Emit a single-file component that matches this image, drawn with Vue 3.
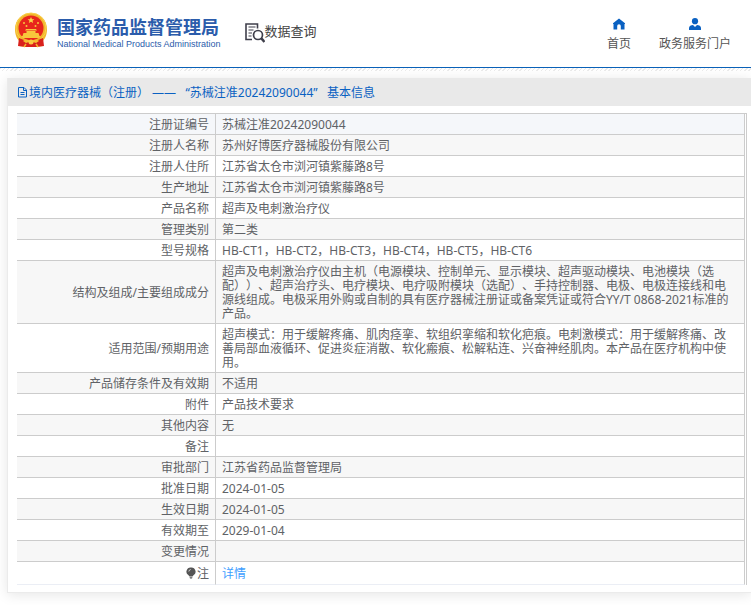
<script setup>
const rows = [
  { label: '注册证编号', value: '苏械注准20242090044' },
  { label: '注册人名称', value: '苏州好博医疗器械股份有限公司' },
  { label: '注册人住所', value: '江苏省太仓市浏河镇紫藤路8号' },
  { label: '生产地址', value: '江苏省太仓市浏河镇紫藤路8号' },
  { label: '产品名称', value: '超声及电刺激治疗仪' },
  { label: '管理类别', value: '第二类' },
  { label: '型号规格', value: 'HB-CT1，HB-CT2，HB-CT3，HB-CT4，HB-CT5，HB-CT6' },
  {
    label: '结构及组成/主要组成成分',
    value:
      '超声及电刺激治疗仪由主机（电源模块、控制单元、显示模块、超声驱动模块、电池模块（选配））、超声治疗头、电疗模块、电疗吸附模块（选配）、手持控制器、电极、电极连接线和电源线组成。电极采用外购或自制的具有医疗器械注册证或备案凭证或符合YY/T 0868-2021标准的产品。',
  },
  {
    label: '适用范围/预期用途',
    value:
      '超声模式：用于缓解疼痛、肌肉痉挛、软组织挛缩和软化疤痕。电刺激模式：用于缓解疼痛、改善局部血液循环、促进炎症消散、软化瘢痕、松解粘连、兴奋神经肌肉。本产品在医疗机构中使用。',
  },
  { label: '产品储存条件及有效期', value: '不适用' },
  { label: '附件', value: '产品技术要求' },
  { label: '其他内容', value: '无' },
  { label: '备注', value: '' },
  { label: '审批部门', value: '江苏省药品监督管理局' },
  { label: '批准日期', value: '2024-01-05' },
  { label: '生效日期', value: '2024-01-05' },
  { label: '有效期至', value: '2029-01-04' },
  { label: '变更情况', value: '' },
]
</script>

<template>
  <div class="page">
    <header class="top">
      <a class="brand" href="#">
        <svg class="emblem" viewBox="0 0 34 36" aria-hidden="true">
          <path d="M17 1C7.500 1 1 8 1 17c0 6 2 10 5 13l-1 4 7 1h10l7-1-1-4c3-3 5-7 5-13C33 8 26.500 1 17 1z" fill="#f2b62c" />
          <circle cx="17" cy="16" r="15" fill="none" stroke="#f9d24c" stroke-width="1" />
          <path d="M5 26l5 2h14l5-2 1 8-8 1H12l-8-1z" fill="#d9211c" />
          <circle cx="17" cy="16" r="12.500" fill="#e8251c" />
          <path d="M17 5l1 2.200h2.400l-1.900 1.500.7 2.400-2.200-1.400-2.200 1.400.7-2.400-1.900-1.500H16z" fill="#fbd648" />
          <g fill="#f8c63c">
            <circle cx="10" cy="11" r="1" /><circle cx="12.500" cy="14" r="1" />
            <circle cx="21.500" cy="14" r="1" /><circle cx="24" cy="11" r="1" />
            <path d="M12 17h10l1 1.500H11zM12.500 19h9v2h3l1 3h-17l1-3h3z" />
            <path d="M7 24h20l-2 2H9z" />
          </g>
          <path d="M9 29c2-2 5-2 8 0 3-2 6-2 8 0l-3 2c-2-1-3-1-5 0-2-1-3-1-5 0z" fill="#f6bd31" />
          <circle cx="17" cy="30" r="2.500" fill="#f9ca42" />
          <path d="M10 35l2-3M24 35l-2-3" stroke="#f2b62c" stroke-width="1.500" />
        </svg>
        <span class="names">
          <span class="name-zh">国家药品监督管理局</span>
          <span class="name-en">National Medical Products Administration</span>
        </span>
      </a>
      <a class="query" href="#">
        <svg class="query-icon" viewBox="0 0 20 20" fill="none" stroke="#3f3f4b" aria-hidden="true">
          <path d="M7 16.500H1V1h11.500v4.500" stroke-width="1.600" />
          <path d="M3.500 4h7M3.500 7h5M3.500 10h3.500M3.500 13h3" stroke-width="1.200" />
          <circle cx="13" cy="12" r="4.500" stroke-width="1.700" />
          <path d="M16 15l3.500 4" stroke-width="2.600" />
        </svg>
        <span>数据查询</span>
      </a>
      <nav class="nav">
        <a href="#">
          <svg viewBox="0 0 12 12" aria-hidden="true"><path d="M6 .5L0 5.200V6h.5v5.500h3.700V8a1.800 1.800 0 0 1 3.600 0v3.500h3.700V6h.5v-.8z" fill="#0a61c2" /></svg>
          <span>首页</span>
        </a>
        <a href="#">
          <svg viewBox="0 0 12 12" aria-hidden="true"><circle cx="6" cy="3.200" r="3.100" fill="#0a61c2" /><path d="M0 12V10c0-2 2-3 4-3l2 2 2-2c2 0 4 1 4 3v2z" fill="#0a61c2" /></svg>
          <span>政务服务门户</span>
        </a>
      </nav>
    </header>
    <div class="hatch"></div>

    <main class="card">
      <h1 class="card-title">
        <svg viewBox="0 0 11 12" fill="none" stroke="#0a61c2" aria-hidden="true">
          <path d="M1.500 1.500H7L9.500 4v7h-8zM6.500 1.500V4.500h3M3.500 6.500h4M3.500 8.500h4" />
        </svg>
        <span>境内医疗器械（注册） ——&nbsp;&nbsp; “苏械注准20242090044”&nbsp;&nbsp; 基本信息</span>
      </h1>
      <div class="card-body">
        <div class="frame">
          <table class="info">
            <tbody>
              <tr v-for="row in rows" :key="row.label">
                <th scope="row">{{ row.label }}</th>
                <td>{{ row.value }}</td>
              </tr>
              <tr class="note">
                <th scope="row">
                  <svg viewBox="0 0 10 12" aria-hidden="true"><path d="M5 .5a4.200 4.200 0 0 0-2.500 7.800L3.500 9.500h3l1-1.200A4.200 4.200 0 0 0 5 .5zM3.500 10.200h3L6 11.500H4z" fill="#555" /><path d="M2.800 4.500q.2-1.700 1.900-2" fill="none" stroke="#fff" stroke-width=".7" /></svg>注
                </th>
                <td><a href="#">详情</a></td>
              </tr>
            </tbody>
          </table>
        </div>
      </div>
    </main>
  </div>
</template>

<style>
body {
  margin: 0;
  background: #fff;
}
</style>

<style scoped>
.page {
  font-family: "Noto Sans", "Noto Sans CJK SC", sans-serif;
  font-size: 12px;
  color: #606266;
  text-spacing-trim: space-all;
  overflow: hidden;
  padding-bottom: 12px;
}
a {
  text-decoration: none;
  color: inherit;
}
svg {
  display: block;
  flex: none;
}
.top {
  display: flex;
  align-items: flex-start;
  box-sizing: border-box;
  height: 68px;
  padding: 12px 20px 0 14px;
  border-bottom: 1px solid #0a61b8;
}
.brand {
  display: flex;
  gap: 9px;
  color: #2b5cab;
}
.emblem {
  width: 34px;
  height: 36px;
}
.names {
  display: flex;
  flex-direction: column;
  padding-top: 3px;
  white-space: nowrap;
}
.name-zh {
  font-family: "Noto Sans CJK SC", sans-serif;
  font-size: 18px;
  line-height: 22px;
  font-weight: 700;
}
.name-en {
  font-family: "Liberation Sans", sans-serif;
  font-size: 9px;
  line-height: 14px;
}
.query {
  display: flex;
  margin-left: 24px;
  padding-top: 9px;
  font-size: 13px;
  line-height: 20px;
  color: #444;
}
.query-icon {
  width: 20px;
  height: 20px;
  margin-top: 2px;
}
.nav {
  display: flex;
  gap: 28px;
  margin-left: auto;
  padding-top: 6px;
  line-height: 18px;
  color: #555;
}
.nav a {
  display: flex;
  flex-direction: column;
  align-items: center;
  gap: 5px;
}
.nav svg {
  width: 12px;
  height: 12px;
}
.hatch {
  height: 3px;
  background: repeating-linear-gradient(135deg, #ebebeb 0 1px, #fff 1px 3px);
}
.card {
  margin: 7px 0 0 7px;
  border: 1px solid #ebebeb;
  border-width: 0 0 1px 1px;
  box-shadow: 0 2px 12px rgba(0, 0, 0, 0.1);
}
.card-title {
  display: flex;
  align-items: center;
  gap: 1px;
  margin: 0;
  padding: 0 9px;
  height: 28px;
  background: #e9e9e9;
  font-size: 12px;
  font-weight: 400;
  color: #0a61c2;
}
.card-title svg {
  width: 11px;
  height: 12px;
}
.card-body {
  padding: 7px 4px 7px 9px;
}
.frame {
  padding-right: 1px;
  border-top: 1px solid #ccc;
  border-right: 1px solid #ccc;
}
.info {
  width: 100%;
  table-layout: fixed;
  border-collapse: separate;
  border-spacing: 0;
}
.info th,
.info td {
  box-sizing: border-box;
  height: 21px;
  padding: 4px 6px 2px;
  border-right: 1px solid #ccc;
  border-bottom: 1px solid #ccc;
  line-height: 14px;
  font-weight: 400;
  vertical-align: middle;
}
.info th {
  width: 199px;
  text-align: right;
}
.info td {
  padding-right: 8px;
  text-align: left;
}
.info tr:nth-child(even) {
  background: #f7f7f7;
}
.info tr:first-child {
  background: #f5f7fa;
}
.info .note {
  background: #fff;
}
.info .note th,
.info .note td {
  height: 23px;
  border-bottom-color: #ebeef5;
}
.note svg {
  display: inline-block;
  width: 10px;
  height: 12px;
  margin-right: 1px;
  vertical-align: -1px;
}
.note a {
  color: #409eff;
}
</style>
